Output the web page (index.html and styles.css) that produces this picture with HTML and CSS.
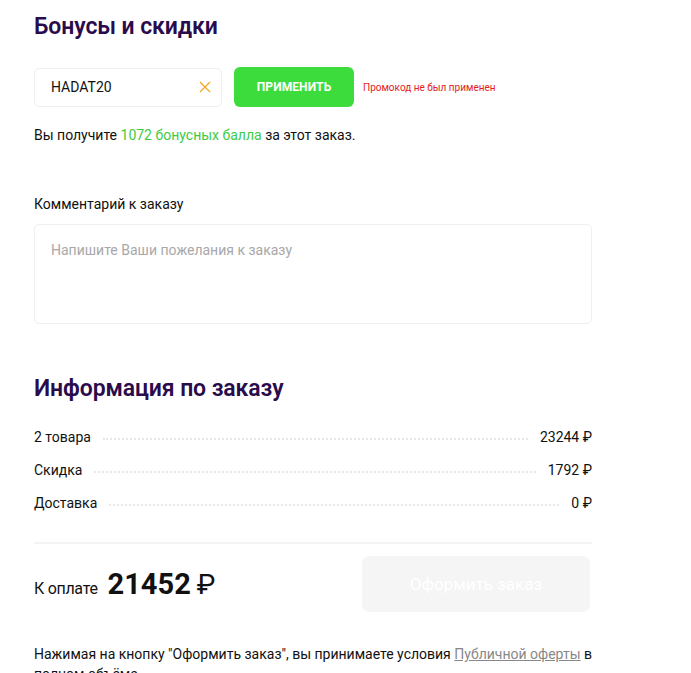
FILE: index.html
```html
<!DOCTYPE html>
<html lang="ru">
<head>
<meta charset="utf-8">
<link rel="stylesheet" href="styles.css">
</head>
<body>
<div class="page">
  <h2 class="title">Бонусы и скидки</h2>
  <div class="promo">
    <div class="promo-input">
      <span class="promo-code">HADAT20</span>
      <svg class="clear" width="12" height="12" viewBox="0 0 12 12"><path d="M1 1L11 11M11 1L1 11" stroke="#f5a623" stroke-width="1.3" fill="none"/></svg>
    </div>
    <button class="apply">ПРИМЕНИТЬ</button>
    <span class="promo-error">Промокод не был применен</span>
  </div>
  <p class="bonus">Вы получите <span class="green">1072 бонусных балла</span> за этот заказ.</p>

  <p class="label">Комментарий к заказу</p>
  <div class="comment">Напишите Ваши пожелания к заказу</div>

  <h2 class="title title2">Информация по заказу</h2>
  <div class="rows">
    <div class="row"><span>2 товара</span><span class="dots"></span><span>23244 ₽</span></div>
    <div class="row"><span>Скидка</span><span class="dots"></span><span>1792 ₽</span></div>
    <div class="row"><span>Доставка</span><span class="dots"></span><span>0 ₽</span></div>
  </div>
  <div class="divider"></div>
  <div class="total">
    <div class="sum"><span class="sum-label">К оплате</span><span class="sum-value">21452</span><span class="sum-cur">₽</span></div>
    <button class="order">Оформить заказ</button>
  </div>
  <p class="terms">Нажимая на кнопку "Оформить заказ", вы принимаете условия <a class="link">Публичной оферты</a> в полном объёме.</p>
</div>
</body>
</html>
```
FILE: styles.css
```css
* { box-sizing: border-box; }
html, body { margin: 0; padding: 0; background: #fff; }
body { font-family: Roboto, "Noto Sans", sans-serif; color: #111; font-size: 14px; }
.page { width: 558px; margin-left: 34px; padding-top: 12px; }
.title { margin: 0; font-size: 23px; font-weight: 600; color: #2a0b4c; line-height: 30px; letter-spacing: -0.1px; }
.promo { display: flex; align-items: center; margin-top: 25px; }
.promo-input { width: 188px; height: 39px; border: 1px solid #efefef; border-radius: 5px; display: flex; align-items: center; justify-content: space-between; padding: 0 10px 0 16px; }
.promo-code { font-size: 14px; color: #111; }
.apply { margin-left: 12px; width: 120px; height: 40px; background: #3ddc3d; border: none; border-radius: 6px; color: #fff; font-family: inherit; font-weight: 700; font-size: 12px; letter-spacing: 0.1px; }
.promo-error { margin-left: 9px; font-size: 10px; color: #e31b1b; }
.bonus { margin: 18px 0 0; line-height: 20px; }
.green { color: #3fcb3f; }
.label { margin: 49px 0 0; line-height: 20px; }
.comment { margin-top: 10px; height: 100px; border: 1px solid #efefef; border-radius: 5px; padding: 15px 16px; color: #a8a8a8; line-height: 20px; }
.title2 { margin-top: 50px; }
.rows { margin-top: 16px; }
.row { display: flex; align-items: center; height: 33px; }
.dots { flex: 1; margin: 0 12px; border-bottom: 2px dotted #e8e8e8; height: 0; position: relative; top: 2px; }
.divider { margin-top: 23px; height: 2px; background: #f4f4f4; }
.total { display: flex; justify-content: space-between; align-items: center; margin-top: 12px; }
.sum { display: flex; align-items: baseline; }
.sum-label { font-size: 16px; letter-spacing: -0.3px; }
.sum-value { margin-left: 10px; font-size: 29px; font-weight: 700; }
.sum-cur { margin-left: 6px; font-size: 28px; font-weight: 400; }
.order { width: 228px; height: 56px; border: none; border-radius: 7px; background: #f5f5f5; color: #fff; font-family: inherit; font-size: 17px; margin-right: 2px; }
.terms { margin: 32px 0 0; line-height: 20px; }
.link { color: #888; text-decoration: underline; }
```
